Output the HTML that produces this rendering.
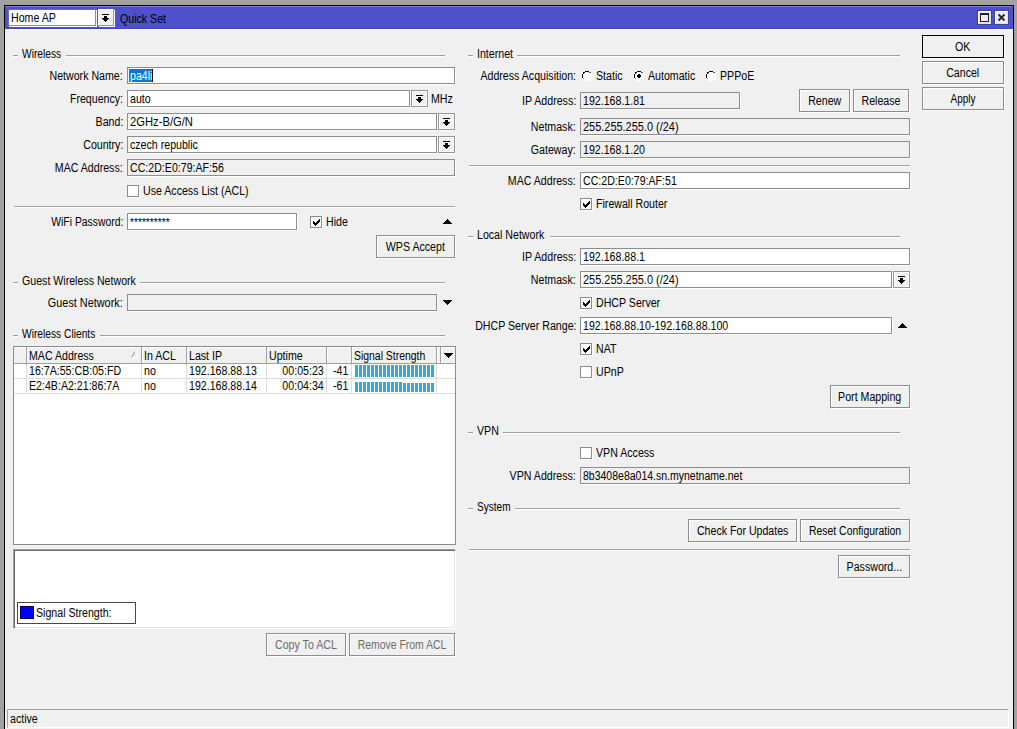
<!DOCTYPE html><html><head><meta charset="utf-8"><title>Quick Set</title><style>
*{box-sizing:border-box;margin:0;padding:0}
html,body{width:1017px;height:729px;overflow:hidden}
body{background:#a1a1a1;font-family:"Liberation Sans",sans-serif;font-size:12px;color:#000;position:relative}
.a{position:absolute;white-space:nowrap}
.win{left:5px;top:6px;width:1008px;height:723px;background:#f0f0f0}
.t{line-height:13px;height:13px;transform:scaleX(.885);transform-origin:0 0}
.r{text-align:right;transform-origin:100% 0}
.tx{display:inline-block;transform:scaleX(.885);transform-origin:0 50%;white-space:nowrap}
.btn .tx{transform-origin:50% 50%}
.inp{height:17px;border:1px solid #8d8d8d;background:#fff;box-shadow:1px 1px 0 #fff;line-height:15px;padding:1px 0 0 2px;overflow:hidden}
.ro{background:#f0f0f0}
.btn{height:23px;border:1px solid #8d8d8d;background:#f0f0f0;box-shadow:1px 1px 0 #fff,inset 1px 1px 0 #fff;text-align:center;line-height:22px}
.dis{color:#6d6d6d}
.dd{width:17px;height:17px;border:1px solid #949494;background:#f0f0f0;box-shadow:1px 1px 0 #fff,inset 1px 1px 0 #fff,inset -1px -1px 0 #fafafa}
.cb{width:12px;height:12px;border:1px solid #8b8b8b;background:#fff;box-shadow:1px 1px 0 #fff}
.hl{height:1px;background:#a0a0a0;box-shadow:0 1px 0 #fff}
svg{position:absolute;display:block;overflow:visible}
</style></head><body>
<div class="a" style="left:4px;top:5px;width:1010px;height:724px;background:#000"></div>
<div class="a win"></div>
<div class="a" style="left:5px;top:6px;width:1008px;height:23px;background:#4d51cb;box-shadow:inset 0 1px 0 #7b7fdb,inset 0 -1px 0 #464ab4"></div>
<div class="a" style="left:5px;top:29px;width:1008px;height:2px;background:linear-gradient(#f3f3ff,#f6f6fb)"></div>
<div class="a inp " style="left:8px;top:9px;width:88px;padding-left:2px;border-top-color:#6a6cb4;border-left-color:#6a6cb4"><span class="tx">Home AP</span></div>
<div class="a dd" style="left:98px;top:9px;width:16px;height:17px;border-top-color:#fff;border-left-color:#fff;box-shadow:1px 1px 0 #fff"><svg width="7" height="8" viewBox="0 0 7 8" style="left:3px;top:4px" shape-rendering="crispEdges"><rect x="0" y="0" width="7" height="1"/><rect x="2" y="2" width="3" height="2"/><rect x="0" y="4" width="7" height="1"/><rect x="1" y="5" width="5" height="1"/><rect x="2" y="6" width="3" height="1"/><rect x="3" y="7" width="1" height="1"/></svg></div>
<div class="a t " style="left:120px;top:13px;color:#ffftransform:scaleX(0.905);">Quick Set</div>
<div class="a" style="left:977px;top:10px;width:15px;height:15px;background:#ececec;border:1px solid #3d41a6;box-shadow:inset 1px 1px 0 #fff,inset -1px -1px 0 #e0e0e0"><div class="a" style="left:2px;top:2px;width:9px;height:9px;border:1px solid #222;border-top-width:2px"></div></div>
<div class="a" style="left:994px;top:10px;width:15px;height:15px;background:#ececec;border:1px solid #3d41a6;box-shadow:inset 1px 1px 0 #fff,inset -1px -1px 0 #e0e0e0"><svg width="7" height="7" viewBox="0 0 7 7" style="left:3px;top:3px"><path d="M0.5 0.5L6.5 6.5M6.5 0.5L0.5 6.5" stroke="#222" stroke-width="1.8"/></svg></div>
<div class="a hl" style="left:13px;top:55px;width:5px"></div>
<div class="a t " style="left:22px;top:48px;transform:scaleX(0.85);">Wireless</div>
<div class="a hl" style="left:66px;top:55px;width:379px"></div>
<div class="a t r " style="right:894px;top:70px;">Network Name:</div>
<div class="a inp " style="left:127px;top:67px;width:328px;"></div>
<div class="a" style="left:129px;top:69px;width:23px;height:13px;background:#0078d7"></div><div class="a" style="left:152px;top:69px;width:1px;height:13px;background:#000"></div>
<div class="a t " style="left:129.5px;top:70px;color:#fff">pa4li</div>
<div class="a t r " style="right:894px;top:93px;">Frequency:</div>
<div class="a inp " style="left:127px;top:90px;width:283px;"><span class="tx">auto</span></div>
<div class="a dd" style="left:411px;top:90px;"><svg width="7" height="8" viewBox="0 0 7 8" style="left:4px;top:4px" shape-rendering="crispEdges"><rect x="0" y="0" width="7" height="1"/><rect x="2" y="2" width="3" height="2"/><rect x="0" y="4" width="7" height="1"/><rect x="1" y="5" width="5" height="1"/><rect x="2" y="6" width="3" height="1"/><rect x="3" y="7" width="1" height="1"/></svg></div>
<div class="a t " style="left:431px;top:93px;">MHz</div>
<div class="a t r " style="right:894px;top:116px;">Band:</div>
<div class="a inp " style="left:127px;top:113px;width:310px;"><span class="tx" style="transform:scaleX(0.935)">2GHz-B/G/N</span></div>
<div class="a dd" style="left:438px;top:113px;"><svg width="7" height="8" viewBox="0 0 7 8" style="left:4px;top:4px" shape-rendering="crispEdges"><rect x="0" y="0" width="7" height="1"/><rect x="2" y="2" width="3" height="2"/><rect x="0" y="4" width="7" height="1"/><rect x="1" y="5" width="5" height="1"/><rect x="2" y="6" width="3" height="1"/><rect x="3" y="7" width="1" height="1"/></svg></div>
<div class="a t r " style="right:894px;top:139px;">Country:</div>
<div class="a inp " style="left:127px;top:136px;width:310px;"><span class="tx">czech republic</span></div>
<div class="a dd" style="left:438px;top:136px;"><svg width="7" height="8" viewBox="0 0 7 8" style="left:4px;top:4px" shape-rendering="crispEdges"><rect x="0" y="0" width="7" height="1"/><rect x="2" y="2" width="3" height="2"/><rect x="0" y="4" width="7" height="1"/><rect x="1" y="5" width="5" height="1"/><rect x="2" y="6" width="3" height="1"/><rect x="3" y="7" width="1" height="1"/></svg></div>
<div class="a t r " style="right:894px;top:162px;">MAC Address:</div>
<div class="a inp ro" style="left:127px;top:159px;width:328px;"><span class="tx">CC:2D:E0:79:AF:56</span></div>
<div class="a cb" style="left:127px;top:185px"></div>
<div class="a t " style="left:143px;top:185px;">Use Access List (ACL)</div>
<div class="a hl" style="left:14px;top:206px;width:441px"></div>
<div class="a t r " style="right:894px;top:216px;transform:scaleX(0.865);">WiFi Password:</div>
<div class="a inp " style="left:127px;top:213px;width:170px;"></div>
<div class="a t " style="left:129.5px;top:215.5px;font-size:11.5px">**********</div>
<div class="a cb" style="left:310px;top:216px"><svg width="7" height="7" viewBox="0 0 7 7" style="left:2px;top:2px" shape-rendering="crispEdges"><rect x="0" y="2" width="1" height="3"/><rect x="1" y="3" width="1" height="3"/><rect x="2" y="4" width="1" height="3"/><rect x="3" y="3" width="1" height="3"/><rect x="4" y="2" width="1" height="3"/><rect x="5" y="1" width="1" height="3"/><rect x="6" y="0" width="1" height="3"/></svg></div>
<div class="a t " style="left:326px;top:216px;">Hide</div>
<svg class="a" width="9" height="5" viewBox="0 0 9 5" style="left:443px;top:219px" shape-rendering="crispEdges"><rect x="4" y="0" width="1" height="1"/><rect x="3" y="1" width="3" height="1"/><rect x="2" y="2" width="5" height="1"/><rect x="1" y="3" width="7" height="1"/><rect x="0" y="4" width="9" height="1"/></svg>
<div class="a btn " style="left:376px;top:235px;width:79px;"><span class="tx">WPS Accept</span></div>
<div class="a hl" style="left:13px;top:282px;width:5px"></div>
<div class="a t " style="left:22px;top:275px;">Guest Wireless Network</div>
<div class="a hl" style="left:140px;top:282px;width:305px"></div>
<div class="a t r " style="right:894px;top:297px;transform:scaleX(0.905);">Guest Network:</div>
<div class="a inp ro" style="left:127px;top:294px;width:310px;"></div>
<svg class="a" width="9" height="5" viewBox="0 0 9 5" style="left:443px;top:300px" shape-rendering="crispEdges"><rect x="0" y="0" width="9" height="1"/><rect x="1" y="1" width="7" height="1"/><rect x="2" y="2" width="5" height="1"/><rect x="3" y="3" width="3" height="1"/><rect x="4" y="4" width="1" height="1"/></svg>
<div class="a hl" style="left:13px;top:335px;width:5px"></div>
<div class="a t " style="left:22px;top:328px;transform:scaleX(0.852);">Wireless Clients</div>
<div class="a hl" style="left:100px;top:335px;width:345px"></div>
<div class="a" style="left:13px;top:346px;width:443px;height:199px;border:1px solid #8b8b8b;background:#fff"></div>
<div class="a" style="left:14px;top:347px;width:441px;height:16px;background:#f0f0f0;box-shadow:inset 0 1px 0 #fff"></div>
<div class="a" style="left:14px;top:363px;width:441px;height:1px;background:#a0a0a0"></div>
<div class="a" style="left:26px;top:347px;width:1px;height:16px;background:#a0a0a0;box-shadow:1px 0 0 #fff"></div>
<div class="a" style="left:26px;top:364px;width:1px;height:29px;background:#dcdcdc"></div>
<div class="a" style="left:141px;top:347px;width:1px;height:16px;background:#a0a0a0;box-shadow:1px 0 0 #fff"></div>
<div class="a" style="left:141px;top:364px;width:1px;height:29px;background:#dcdcdc"></div>
<div class="a" style="left:186px;top:347px;width:1px;height:16px;background:#a0a0a0;box-shadow:1px 0 0 #fff"></div>
<div class="a" style="left:186px;top:364px;width:1px;height:29px;background:#dcdcdc"></div>
<div class="a" style="left:266px;top:347px;width:1px;height:16px;background:#a0a0a0;box-shadow:1px 0 0 #fff"></div>
<div class="a" style="left:266px;top:364px;width:1px;height:29px;background:#dcdcdc"></div>
<div class="a" style="left:326px;top:347px;width:1px;height:16px;background:#a0a0a0;box-shadow:1px 0 0 #fff"></div>
<div class="a" style="left:326px;top:364px;width:1px;height:29px;background:#dcdcdc"></div>
<div class="a" style="left:351px;top:347px;width:1px;height:16px;background:#a0a0a0;box-shadow:1px 0 0 #fff"></div>
<div class="a" style="left:351px;top:364px;width:1px;height:29px;background:#dcdcdc"></div>
<div class="a" style="left:436px;top:347px;width:1px;height:16px;background:#a0a0a0;box-shadow:1px 0 0 #fff"></div>
<div class="a" style="left:436px;top:364px;width:1px;height:29px;background:#dcdcdc"></div>
<div class="a" style="left:440px;top:347px;width:1px;height:16px;background:#a0a0a0;box-shadow:1px 0 0 #fff"></div>
<div class="a" style="left:14px;top:378px;width:441px;height:1px;background:#dcdcdc"></div>
<div class="a" style="left:14px;top:393px;width:441px;height:1px;background:#dcdcdc"></div>
<div class="a t " style="left:29px;top:350px;">MAC Address</div>
<div class="a t " style="left:144px;top:350px;">In ACL</div>
<div class="a t " style="left:189px;top:350px;">Last IP</div>
<div class="a t " style="left:269px;top:350px;">Uptime</div>
<div class="a t " style="left:354px;top:350px;transform:scaleX(0.868);">Signal Strength</div>
<svg class="a" width="8" height="7" viewBox="0 0 8 7" style="left:131px;top:351px"><path d="M0.5 6.5L4 0.5" stroke="#909090" fill="none"/><path d="M4 0.5L7.5 6.5L0.5 6.5" stroke="#fff" fill="none"/></svg>
<svg class="a" width="9" height="5" viewBox="0 0 9 5" style="left:444px;top:353px" shape-rendering="crispEdges"><rect x="0" y="0" width="9" height="1"/><rect x="1" y="1" width="7" height="1"/><rect x="2" y="2" width="5" height="1"/><rect x="3" y="3" width="3" height="1"/><rect x="4" y="4" width="1" height="1"/></svg>
<div class="a t " style="left:29px;top:365px;">16:7A:55:CB:05:FD</div>
<div class="a t " style="left:144px;top:365px;">no</div>
<div class="a t " style="left:189px;top:365px;">192.168.88.13</div>
<div class="a t r " style="right:693px;top:365px;">00:05:23</div>
<div class="a t r " style="right:669px;top:365px;">-41</div>
<div class="a t " style="left:29px;top:380px;">E2:4B:A2:21:86:7A</div>
<div class="a t " style="left:144px;top:380px;">no</div>
<div class="a t " style="left:189px;top:380px;">192.168.88.14</div>
<div class="a t r " style="right:693px;top:380px;">00:04:34</div>
<div class="a t r " style="right:669px;top:380px;">-61</div>
<div class="a" style="left:355px;top:365px;width:3px;height:12px;background:#38a6d8"></div>
<div class="a" style="left:355px;top:382px;width:3px;height:10px;background:#38a6d8"></div>
<div class="a" style="left:359px;top:365px;width:3px;height:12px;background:#38a6d8"></div>
<div class="a" style="left:359px;top:382px;width:3px;height:10px;background:#38a6d8"></div>
<div class="a" style="left:363px;top:365px;width:3px;height:12px;background:#38a6d8"></div>
<div class="a" style="left:363px;top:382px;width:3px;height:10px;background:#38a6d8"></div>
<div class="a" style="left:367px;top:365px;width:3px;height:12px;background:#38a6d8"></div>
<div class="a" style="left:367px;top:382px;width:3px;height:10px;background:#38a6d8"></div>
<div class="a" style="left:371px;top:365px;width:3px;height:12px;background:#38a6d8"></div>
<div class="a" style="left:371px;top:382px;width:3px;height:10px;background:#38a6d8"></div>
<div class="a" style="left:375px;top:365px;width:3px;height:12px;background:#38a6d8"></div>
<div class="a" style="left:375px;top:382px;width:3px;height:10px;background:#38a6d8"></div>
<div class="a" style="left:379px;top:365px;width:3px;height:12px;background:#38a6d8"></div>
<div class="a" style="left:379px;top:382px;width:3px;height:10px;background:#38a6d8"></div>
<div class="a" style="left:383px;top:365px;width:3px;height:12px;background:#38a6d8"></div>
<div class="a" style="left:383px;top:382px;width:3px;height:10px;background:#38a6d8"></div>
<div class="a" style="left:387px;top:365px;width:3px;height:12px;background:#38a6d8"></div>
<div class="a" style="left:387px;top:382px;width:3px;height:10px;background:#38a6d8"></div>
<div class="a" style="left:391px;top:365px;width:3px;height:12px;background:#38a6d8"></div>
<div class="a" style="left:391px;top:382px;width:3px;height:10px;background:#38a6d8"></div>
<div class="a" style="left:395px;top:365px;width:3px;height:12px;background:#38a6d8"></div>
<div class="a" style="left:395px;top:382px;width:3px;height:10px;background:#38a6d8"></div>
<div class="a" style="left:399px;top:365px;width:3px;height:12px;background:#38a6d8"></div>
<div class="a" style="left:399px;top:382px;width:3px;height:10px;background:#38a6d8"></div>
<div class="a" style="left:403px;top:365px;width:3px;height:12px;background:#38a6d8"></div>
<div class="a" style="left:403px;top:383px;width:3px;height:9px;background:#38a6d8"></div>
<div class="a" style="left:407px;top:365px;width:3px;height:12px;background:#38a6d8"></div>
<div class="a" style="left:407px;top:383px;width:3px;height:9px;background:#38a6d8"></div>
<div class="a" style="left:411px;top:365px;width:3px;height:12px;background:#38a6d8"></div>
<div class="a" style="left:411px;top:383px;width:3px;height:9px;background:#38a6d8"></div>
<div class="a" style="left:415px;top:365px;width:3px;height:12px;background:#38a6d8"></div>
<div class="a" style="left:415px;top:383px;width:3px;height:9px;background:#38a6d8"></div>
<div class="a" style="left:419px;top:365px;width:3px;height:12px;background:#38a6d8"></div>
<div class="a" style="left:419px;top:383px;width:3px;height:9px;background:#38a6d8"></div>
<div class="a" style="left:423px;top:365px;width:3px;height:12px;background:#38a6d8"></div>
<div class="a" style="left:423px;top:383px;width:3px;height:9px;background:#38a6d8"></div>
<div class="a" style="left:427px;top:365px;width:3px;height:12px;background:#38a6d8"></div>
<div class="a" style="left:427px;top:383px;width:3px;height:9px;background:#38a6d8"></div>
<div class="a" style="left:431px;top:365px;width:3px;height:12px;background:#38a6d8"></div>
<div class="a" style="left:431px;top:383px;width:3px;height:9px;background:#38a6d8"></div>
<div class="a" style="left:13px;top:549px;width:443px;height:80px;background:#fff;border:1px solid #fff;border-top-color:#a0a0a0;border-left-color:#a0a0a0;box-shadow:inset 1px 1px 0 #696969,inset -1px -1px 0 #e3e3e3"></div>
<div class="a" style="left:17px;top:602px;width:119px;height:22px;border:1px solid #484848;background:#fff"></div>
<div class="a" style="left:20px;top:606px;width:14px;height:13px;border:1px solid #00005c;background:#0000ff"></div>
<div class="a t " style="left:36px;top:607px;">Signal Strength:</div>
<div class="a btn dis" style="left:266px;top:633px;width:80px;"><span class="tx">Copy To ACL</span></div>
<div class="a btn dis" style="left:349px;top:633px;width:106px;"><span class="tx" style="transform:scaleX(0.87)">Remove From ACL</span></div>
<div class="a hl" style="left:468px;top:55px;width:5px"></div>
<div class="a t " style="left:477px;top:48px;">Internet</div>
<div class="a hl" style="left:517px;top:55px;width:383px"></div>
<div class="a t r " style="right:441px;top:70px;">Address Acquisition:</div>
<svg class="a" width="12" height="12" viewBox="0 0 12 12" style="left:581px;top:70px"><circle cx="6" cy="6" r="5.4" fill="#fff"/><g shape-rendering="crispEdges"><rect x="4" y="1" width="4" height="1"/><rect x="2" y="2" width="2" height="1"/><rect x="8" y="2" width="2" height="1" fill="#555"/><rect x="2" y="3" width="1" height="1"/><rect x="1" y="4" width="1" height="4"/><rect x="2" y="8" width="1" height="1" fill="#999"/></g></svg>
<div class="a t " style="left:596px;top:70px;">Static</div>
<svg class="a" width="12" height="12" viewBox="0 0 12 12" style="left:633px;top:70px"><circle cx="6" cy="6" r="5.4" fill="#fff"/><g shape-rendering="crispEdges"><rect x="4" y="1" width="4" height="1"/><rect x="2" y="2" width="2" height="1"/><rect x="8" y="2" width="2" height="1" fill="#555"/><rect x="2" y="3" width="1" height="1"/><rect x="1" y="4" width="1" height="4"/><rect x="2" y="8" width="1" height="1" fill="#999"/><path d="M5 4h2v1h1v2h-1v1h-2v-1h-1v-2h1z" fill="#000"/></g></svg>
<div class="a t " style="left:648px;top:70px;">Automatic</div>
<svg class="a" width="12" height="12" viewBox="0 0 12 12" style="left:705px;top:70px"><circle cx="6" cy="6" r="5.4" fill="#fff"/><g shape-rendering="crispEdges"><rect x="4" y="1" width="4" height="1"/><rect x="2" y="2" width="2" height="1"/><rect x="8" y="2" width="2" height="1" fill="#555"/><rect x="2" y="3" width="1" height="1"/><rect x="1" y="4" width="1" height="4"/><rect x="2" y="8" width="1" height="1" fill="#999"/></g></svg>
<div class="a t " style="left:720px;top:70px;">PPPoE</div>
<div class="a t r " style="right:441px;top:95px;">IP Address:</div>
<div class="a inp ro" style="left:580px;top:92px;width:160px;"><span class="tx">192.168.1.81</span></div>
<div class="a btn " style="left:799px;top:89px;width:51px;"><span class="tx">Renew</span></div>
<div class="a btn " style="left:853px;top:89px;width:56px;"><span class="tx">Release</span></div>
<div class="a t r " style="right:441px;top:121px;">Netmask:</div>
<div class="a inp ro" style="left:580px;top:118px;width:330px;"><span class="tx" style="transform:scaleX(0.912)">255.255.255.0 (/24)</span></div>
<div class="a t r " style="right:441px;top:144px;">Gateway:</div>
<div class="a inp ro" style="left:580px;top:141px;width:330px;"><span class="tx">192.168.1.20</span></div>
<div class="a hl" style="left:469px;top:165px;width:441px"></div>
<div class="a t r " style="right:441px;top:175px;">MAC Address:</div>
<div class="a inp " style="left:580px;top:172px;width:330px;"><span class="tx">CC:2D:E0:79:AF:51</span></div>
<div class="a cb" style="left:580px;top:198px"><svg width="7" height="7" viewBox="0 0 7 7" style="left:2px;top:2px" shape-rendering="crispEdges"><rect x="0" y="2" width="1" height="3"/><rect x="1" y="3" width="1" height="3"/><rect x="2" y="4" width="1" height="3"/><rect x="3" y="3" width="1" height="3"/><rect x="4" y="2" width="1" height="3"/><rect x="5" y="1" width="1" height="3"/><rect x="6" y="0" width="1" height="3"/></svg></div>
<div class="a t " style="left:596px;top:198px;">Firewall Router</div>
<div class="a hl" style="left:468px;top:236px;width:5px"></div>
<div class="a t " style="left:477px;top:229px;">Local Network</div>
<div class="a hl" style="left:550px;top:236px;width:350px"></div>
<div class="a t r " style="right:441px;top:251px;">IP Address:</div>
<div class="a inp " style="left:580px;top:248px;width:330px;"><span class="tx">192.168.88.1</span></div>
<div class="a t r " style="right:441px;top:274px;">Netmask:</div>
<div class="a inp " style="left:580px;top:271px;width:312px;"><span class="tx" style="transform:scaleX(0.912)">255.255.255.0 (/24)</span></div>
<div class="a dd" style="left:893px;top:271px;"><svg width="7" height="8" viewBox="0 0 7 8" style="left:4px;top:4px" shape-rendering="crispEdges"><rect x="0" y="0" width="7" height="1"/><rect x="2" y="2" width="3" height="2"/><rect x="0" y="4" width="7" height="1"/><rect x="1" y="5" width="5" height="1"/><rect x="2" y="6" width="3" height="1"/><rect x="3" y="7" width="1" height="1"/></svg></div>
<div class="a cb" style="left:580px;top:297px"><svg width="7" height="7" viewBox="0 0 7 7" style="left:2px;top:2px" shape-rendering="crispEdges"><rect x="0" y="2" width="1" height="3"/><rect x="1" y="3" width="1" height="3"/><rect x="2" y="4" width="1" height="3"/><rect x="3" y="3" width="1" height="3"/><rect x="4" y="2" width="1" height="3"/><rect x="5" y="1" width="1" height="3"/><rect x="6" y="0" width="1" height="3"/></svg></div>
<div class="a t " style="left:596px;top:297px;">DHCP Server</div>
<div class="a t r " style="right:441px;top:320px;">DHCP Server Range:</div>
<div class="a inp " style="left:580px;top:317px;width:312px;"><span class="tx">192.168.88.10-192.168.88.100</span></div>
<svg class="a" width="9" height="5" viewBox="0 0 9 5" style="left:898px;top:323px" shape-rendering="crispEdges"><rect x="4" y="0" width="1" height="1"/><rect x="3" y="1" width="3" height="1"/><rect x="2" y="2" width="5" height="1"/><rect x="1" y="3" width="7" height="1"/><rect x="0" y="4" width="9" height="1"/></svg>
<div class="a cb" style="left:580px;top:343px"><svg width="7" height="7" viewBox="0 0 7 7" style="left:2px;top:2px" shape-rendering="crispEdges"><rect x="0" y="2" width="1" height="3"/><rect x="1" y="3" width="1" height="3"/><rect x="2" y="4" width="1" height="3"/><rect x="3" y="3" width="1" height="3"/><rect x="4" y="2" width="1" height="3"/><rect x="5" y="1" width="1" height="3"/><rect x="6" y="0" width="1" height="3"/></svg></div>
<div class="a t " style="left:596px;top:343px;">NAT</div>
<div class="a cb" style="left:580px;top:366px"></div>
<div class="a t " style="left:596px;top:366px;">UPnP</div>
<div class="a btn " style="left:830px;top:385px;width:80px;"><span class="tx">Port Mapping</span></div>
<div class="a hl" style="left:468px;top:432px;width:5px"></div>
<div class="a t " style="left:477px;top:425px;">VPN</div>
<div class="a hl" style="left:503px;top:432px;width:397px"></div>
<div class="a cb" style="left:580px;top:447px"></div>
<div class="a t " style="left:596px;top:447px;">VPN Access</div>
<div class="a t r " style="right:441px;top:470px;">VPN Address:</div>
<div class="a inp ro" style="left:580px;top:467px;width:330px;"><span class="tx" style="transform:scaleX(0.875)">8b3408e8a014.sn.mynetname.net</span></div>
<div class="a hl" style="left:468px;top:508px;width:5px"></div>
<div class="a t " style="left:477px;top:501px;transform:scaleX(0.84);">System</div>
<div class="a hl" style="left:515px;top:508px;width:385px"></div>
<div class="a btn " style="left:688px;top:519px;width:109px;"><span class="tx">Check For Updates</span></div>
<div class="a btn " style="left:800px;top:519px;width:110px;"><span class="tx" style="transform:scaleX(0.868)">Reset Configuration</span></div>
<div class="a hl" style="left:469px;top:549px;width:441px"></div>
<div class="a btn " style="left:838px;top:555px;width:72px;"><span class="tx">Password...</span></div>
<div class="a btn " style="left:922px;top:35px;width:82px;border-color:#000;box-shadow:1px 1px 0 #fff"><span class="tx">OK</span></div>
<div class="a btn " style="left:922px;top:61px;width:82px;"><span class="tx">Cancel</span></div>
<div class="a btn " style="left:922px;top:87px;width:82px;"><span class="tx" style="transform:scaleX(0.83)">Apply</span></div>
<div class="a" style="left:7px;top:709px;width:1002px;height:19px;border-top:1px solid #a0a0a0;border-left:1px solid #a0a0a0;border-right:1px solid #fff;border-bottom:1px solid #fff"></div>
<div class="a t " style="left:10px;top:713px;">active</div>
</body></html>
